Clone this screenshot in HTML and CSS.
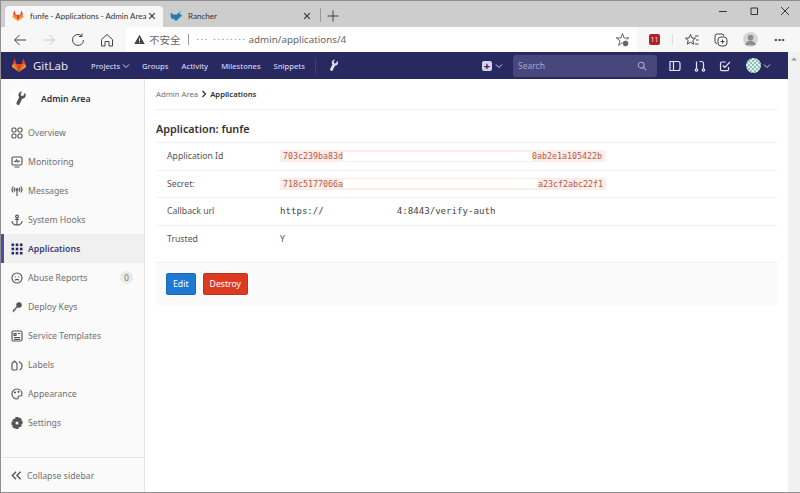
FILE: index.html
```html
<!DOCTYPE html>
<html>
<head>
<meta charset="UTF-8" />
<title>funfe - Applications - Admin Area</title>
<link rel="stylesheet" href="styles.css">
</head>
<body>
<div class="tabstrip">
  <div class="tab tab-active">
    <svg class="tab-icon" viewBox="0 0 16 16"><path fill="#e24329" d="M8 15 5.200 6.400h5.600z"/><path fill="#fc6d26" d="M8 15 5.200 6.400H1.300z"/><path fill="#fca326" d="M1.300 6.400.5 9c-.1.200 0 .5.200.6L8 15z"/><path fill="#e24329" d="M1.300 6.400h3.900L3.500 1.300c-.1-.3-.5-.3-.6 0z"/><path fill="#fc6d26" d="M8 15l2.800-8.600h3.900z"/><path fill="#fca326" d="m14.700 6.400.8 2.600c.1.200 0 .5-.2.6L8 15z"/><path fill="#e24329" d="M14.700 6.400h-3.900l1.700-5.100c.1-.3.5-.3.6 0z"/></svg>
    <span class="tab-title">funfe - Applications - Admin Area</span>
    <svg class="tab-close" viewBox="0 0 10 10"><path d="m1.500 1.500 7 7m0-7-7 7"/></svg>
  </div>
  <div class="tab">
    <svg class="tab-icon" viewBox="0 0 16 16"><path fill="#1c7fb0" d="M1 4h2v2h7V4h3v2h2.500v3H13c0 2-1 3-3 3v2H6v-2H4C2 12 1 10 1 8z"/><path fill="#3fa9d8" d="M12 2h2v2h-2z"/></svg>
    <span class="tab-title">Rancher</span>
    <svg class="tab-close" viewBox="0 0 10 10"><path d="m1.500 1.500 7 7m0-7-7 7"/></svg>
  </div>
  <span class="tab-sep"></span>
  <svg class="tab-new" viewBox="0 0 12 12"><path d="M6 .5v11M.5 6h11"/></svg>
  <div class="window-controls">
    <svg viewBox="0 0 10 10"><path d="M1 5.500h8"/></svg>
    <svg viewBox="0 0 10 10"><path d="M2 2h6.500v6.500H2z"/></svg>
    <svg viewBox="0 0 10 10"><path d="m1 1 8 8m0-8-8 8"/></svg>
  </div>
</div>

<div class="toolbar">
  <svg class="tool" viewBox="0 0 14 14"><path d="M13 7H1.500M6.500 2 1.500 7l5 5"/></svg>
  <svg class="tool tool-off" viewBox="0 0 14 14"><path d="M1 7h11.500M7.500 2l5 5-5 5"/></svg>
  <svg class="tool" viewBox="0 0 14 14"><path d="M12.500 7A5.500 5.500 0 1 1 10.500 2.700M11 .5v3H8"/></svg>
  <svg class="tool" viewBox="0 0 14 14"><path d="M1.500 6.500 7 1.500l5.500 5V13H9V8.500H5V13H1.500z"/></svg>
  <div class="address">
    <svg class="warn" viewBox="0 0 12 12"><path fill="#444" d="M6 .8 11.700 11H.3z"/><path d="M6 4.500v3.500M6 9v1"/></svg>
    <span class="insecure">不安全</span>
    <span class="address-sep"></span>
    <span class="masked">··· ········</span>
    <span class="url">admin/applications/4</span>
    <svg class="tool star" viewBox="0 0 14 14"><path d="M7.500 9.500 3.600 12.200 5 7.700 1.200 4.900H6L7.500.5 9 4.900h4.800L11.500 6.700"/><circle cx="10.500" cy="10.500" r="2.400" fill="#666"/></svg>
  </div>
  <span class="ext-badge">11</span>
  <span class="tool-sep"></span>
  <svg class="tool" viewBox="0 0 14 14"><path d="M5.500 1.500 7 5l3.500.2-2.700 2.300.9 3.700-3.200-2-3.200 2 .9-3.700L.5 5.200 4 5zM10 3h3.500M11 7h2.500M10 11h3.500"/></svg>
  <svg class="tool tool-gap" viewBox="0 0 14 14"><path d="M3 10.500A2 2 0 0 1 1 8.500V3a2 2 0 0 1 2-2h5a2 2 0 0 1 2 2"/><rect x="4" y="4" width="9" height="9" rx="3"/><path d="M8.500 6.500v4M6.500 8.500h4"/></svg>
  <span class="profile"><svg viewBox="0 0 16 16"><circle cx="8" cy="6" r="3" fill="#8c8c8c"/><path fill="#8c8c8c" d="M2.500 14c0-3 2.500-4.500 5.500-4.500s5.500 1.500 5.500 4.500z"/></svg></span>
  <span class="more">···</span>
</div>

<div class="page">
  <div class="app">
    <nav class="navbar">
      <svg class="logo" viewBox="0 0 16 16"><path fill="#e24329" d="M8 15 5.200 6.400h5.600z"/><path fill="#fc6d26" d="M8 15 5.200 6.400H1.300z"/><path fill="#fca326" d="M1.300 6.400.5 9c-.1.200 0 .5.200.6L8 15z"/><path fill="#e24329" d="M1.300 6.400h3.900L3.500 1.300c-.1-.3-.5-.3-.6 0z"/><path fill="#fc6d26" d="M8 15l2.800-8.600h3.900z"/><path fill="#fca326" d="m14.700 6.400.8 2.600c.1.200 0 .5-.2.6L8 15z"/><path fill="#e24329" d="M14.700 6.400h-3.900l1.700-5.100c.1-.3.5-.3.6 0z"/></svg>
      <span class="brand">GitLab</span>
      <ul class="nav-links">
        <li>Projects <svg class="caret" viewBox="0 0 8 8"><path d="m1 2.500 3 3 3-3"/></svg></li>
        <li>Groups</li>
        <li>Activity</li>
        <li>Milestones</li>
        <li>Snippets</li>
      </ul>
      <span class="nav-sep"></span>
      <svg class="nav-wrench" viewBox="0 0 16 16"><path transform="rotate(-20 8 8)" d="M14.300 3.400l-2.700 2.700-2-.5-.5-2L11.800.9a4 4 0 0 0-5.300 5L1.500 10.700a2 2 0 0 0 2.800 2.800l4.800-4.800a4 4 0 0 0 5.200-5.300z"/></svg>
      <div class="nav-right">
        <span class="plus-box">+</span>
        <svg class="caret caret-plus" viewBox="0 0 8 8"><path d="m1 2.500 3 3 3-3"/></svg>
        <div class="search">
          <span>Search</span>
          <svg viewBox="0 0 12 12"><circle cx="5" cy="5" r="3.500"/><path d="m7.500 7.500 3.500 3.500"/></svg>
        </div>
        <svg class="nav-icon nav-icon-first" viewBox="0 0 12 12"><path d="M1 1.500h3.500v9H1zM4.500 1.500H9c1.200 0 2 .8 2 2v5c0 1.200-.8 2-2 2H4.500"/></svg>
        <svg class="nav-icon" viewBox="0 0 12 12"><circle cx="2.500" cy="10" r="1.200"/><circle cx="9.500" cy="10" r="1.200"/><path d="M2.500 8.800V1.500M9.500 8.800V3.500c0-1.200-.8-2-2-2H5.500"/></svg>
        <svg class="nav-icon" viewBox="0 0 12 12"><path d="M9.500 7v2.500c0 .8-.5 1.200-1.200 1.200H2.700c-.7 0-1.200-.4-1.200-1.200V3.200C1.500 2.500 2 2 2.700 2h4M3.800 5.500l2 2L11 2"/></svg>
        <span class="nav-avatar"></span>
        <svg class="caret" viewBox="0 0 8 8"><path d="m1 2.500 3 3 3-3"/></svg>
      </div>
    </nav>

    <div class="layout">
      <aside class="sidebar">
        <div class="side-head">
          <span class="side-avatar"><svg viewBox="0 0 16 16"><path transform="rotate(-20 8 8)" d="M14.300 3.400l-2.700 2.700-2-.5-.5-2L11.800.9a4 4 0 0 0-5.300 5L1.500 10.700a2 2 0 0 0 2.800 2.800l4.800-4.800a4 4 0 0 0 5.200-5.300z"/></svg></span>
          <span class="side-title">Admin Area</span>
        </div>
        <ul class="side-menu">
          <li><svg viewBox="0 0 12 12"><rect x="1" y="1" width="4" height="4" rx="1.200"/><rect x="7" y="1" width="4" height="4" rx="1.200"/><rect x="1" y="7" width="4" height="4" rx="1.200"/><rect x="7" y="7" width="4" height="4" rx="1.200"/></svg>Overview</li>
          <li><svg viewBox="0 0 12 12"><rect x="1" y="1" width="10" height="8" rx="1.500"/><path d="M3 5.500h1.500l1-1.500 1 2 1-1H9M3.500 11h5"/></svg>Monitoring</li>
          <li><svg viewBox="0 0 12 12"><circle cx="6" cy="4.500" r="1"/><path d="M6 5.500V11M4 2.500C3 3.700 3 5.300 4 6.500M8 2.500c1 1.200 1 2.800 0 4M2.200 1.500C.6 3.500.6 5.500 2.200 7.500M9.800 1.500c1.600 2 1.600 4 0 6"/></svg>Messages</li>
          <li><svg viewBox="0 0 12 12"><circle cx="6" cy="2.500" r="1.400"/><path d="M6 4v7M4 5.500h4M1 7c0 2.500 2.500 4 5 4s5-1.500 5-4"/></svg>System Hooks</li>
          <li class="active"><svg viewBox="0 0 12 12"><g class="dots"><rect x=".5" y=".5" width="2.600" height="2.600"/><rect x="4.700" y=".5" width="2.600" height="2.600"/><rect x="8.900" y=".5" width="2.600" height="2.600"/><rect x=".5" y="4.700" width="2.600" height="2.600"/><rect x="4.700" y="4.700" width="2.600" height="2.600"/><rect x="8.900" y="4.700" width="2.600" height="2.600"/><rect x=".5" y="8.900" width="2.600" height="2.600"/><rect x="4.700" y="8.900" width="2.600" height="2.600"/><rect x="8.900" y="8.900" width="2.600" height="2.600"/></g></svg>Applications</li>
          <li><svg viewBox="0 0 12 12"><circle cx="6" cy="6" r="5"/><path d="M3.800 5h1M7.200 5h1M4 8.300c1.200-1 2.800-1 4 0"/></svg>Abuse Reports<span class="count">0</span></li>
          <li><svg viewBox="0 0 12 12"><circle cx="8" cy="4" r="2.200" class="solid"/><path d="M6.500 5.500 2 10M2 10l1 1M3.500 8.500l1 1"/></svg>Deploy Keys</li>
          <li><svg viewBox="0 0 12 12"><rect x="1" y="1" width="10" height="10" rx="1.500"/><path d="M3 7.500h6M3 9.300h6M3 3.500h2v2H3zM7 3.500h2"/></svg>Service Templates</li>
          <li><svg viewBox="0 0 12 12"><path d="M1 4.500 3.500 2 6 4.500V10c0 .6-.4 1-1 1H2c-.6 0-1-.4-1-1zM8 2.500l2.300 2.200c.4.400.7.800.7 1.300V8c0 1-1 2-2.500 3"/></svg>Labels</li>
          <li><svg viewBox="0 0 12 12"><path d="M6 1a5 5 0 0 0 0 10c1 0 1.300-.7 1-1.500-.3-.8.200-1.500 1-1.500h1.500C10.500 8 11 7 11 6c0-3-2.200-5-5-5z"/><circle cx="4" cy="4.500" r=".5"/><circle cx="7.500" cy="3.800" r=".5"/></svg>Appearance</li>
          <li><svg viewBox="0 0 12 12"><path class="solid" d="M5 .5h2l.4 1.500 1.400-.7 1.400 1.400-.7 1.400 1.500.4v2l-1.500.4.700 1.400-1.400 1.400-1.400-.7L7 11.500H5l-.4-1.500-1.400.7-1.400-1.400.7-1.400L1 7.500v-2l1.500-.4-.7-1.400 1.400-1.400 1.400.7z"/><circle cx="6" cy="6" r="1.500" fill="#fafafa" stroke="none"/></svg>Settings</li>
        </ul>
        <div class="collapse"><svg viewBox="0 0 12 12"><path d="M5.500 2 1.500 6l4 4M10.500 2l-4 4 4 4"/></svg>Collapse sidebar</div>
      </aside>

      <main class="content">
        <div class="crumbs"><span class="crumb-root">Admin Area</span><svg viewBox="0 0 8 8"><path d="m2.500 1 3 3-3 3"/></svg><span class="crumb-here">Applications</span></div>
        <h3 class="app-title">Application: funfe</h3>
        <div class="details">
          <div class="row"><span class="key">Application Id</span><code class="secret"><span>703c239ba83d</span><span class="redact redact-id"></span><span>0ab2e1a105422b</span></code></div>
          <div class="row"><span class="key">Secret:</span><code class="secret"><span>718c5177066a</span><span class="redact redact-secret"></span><span>a23cf2abc22f1</span></code></div>
          <div class="row"><span class="key">Callback url</span><span class="callback"><span>https://</span><span class="callback-gap"></span><span>4:8443/verify-auth</span></span></div>
          <div class="row"><span class="key">Trusted</span><span class="val">Y</span></div>
        </div>
        <div class="actions">
          <a class="btn btn-edit">Edit</a>
          <a class="btn btn-destroy">Destroy</a>
        </div>
      </main>
    </div>
  </div>
  <div class="scrollbar"><svg viewBox="0 0 8 8"><path d="M1 5.500 4 2.500l3 3z"/></svg></div>
</div>
</body>
</html>
```

FILE: styles.css
```css
* {
  box-sizing: border-box;
}

html, body {
  height: 100%;
}

body {
  margin: 0;
  font-family: "Noto Sans", "Open Sans", sans-serif;
  font-size: 8.7px;
  color: #555;
  background: #fff;
  display: flex;
  flex-direction: column;
  overflow: hidden;
  border: 1px solid #8f8f8f;
  border-width: 1px 0 1px 1px;
}

svg {
  flex: none;
  fill: none;
  stroke: currentColor;
}

ul {
  list-style: none;
  margin: 0;
  padding: 0;
}

/* Browser chrome */
.tabstrip {
  height: 26px;
  flex: none;
  background: #cdcdcd;
  display: flex;
  align-items: flex-end;
  padding-left: 4px;
}

.tab {
  width: 158px;
  height: 21px;
  display: flex;
  align-items: center;
  padding: 0 10px 2px 7px;
  border-radius: 4px 4px 0 0;
  color: #333;
}

.tab-active {
  padding-right: 7px;
  background: #f7f7f7;
}

.tab-icon {
  width: 12px;
  height: 12px;
  stroke: none;
}

.tab-title {
  flex: 1;
  min-width: 0;
  margin-left: 6px;
  white-space: nowrap;
  font-family: Lato, "Noto Sans", sans-serif;
  font-size: 8px;
}

.tab-close {
  width: 8px;
  height: 8px;
  margin-left: 1px;
  stroke-width: 1.400;
}

.tab-sep {
  width: 1px;
  height: 14px;
  margin: 0 0 5px -1px;
  background: #999;
}

.tab-new {
  width: 12px;
  height: 12px;
  margin: 0 0 5px 6px;
  color: #444;
}

.window-controls {
  margin: 0 10px 11px auto;
  display: flex;
  gap: 21px;
  color: #333;
}

.window-controls svg {
  width: 10px;
  height: 10px;
}

.toolbar {
  height: 25px;
  flex: none;
  background: #f7f7f7;
  display: flex;
  align-items: center;
  padding-left: 12px;
  color: #444;
}

.tool {
  width: 14px;
  height: 14px;
  margin-right: 15px;
}

.tool-off {
  color: #c8c8c8;
}

.tool-gap {
  margin-right: 15px;
}

.address {
  width: 511px;
  height: 25px;
  margin-left: -3px;
  background: #fff;
  display: flex;
  align-items: center;
  padding-left: 8px;
  font-size: 9.800px;
  color: #666;
}

.warn {
  width: 11px;
  height: 11px;
  stroke: none;
}

.warn path:last-child {
  stroke: #fff;
}

.insecure {
  margin-left: 4px;
  font-family: "Noto Sans CJK SC", sans-serif;
  font-size: 10.500px;
}

.address-sep {
  width: 1px;
  height: 11px;
  margin: 0 8px 0 7px;
  background: #999;
}

.masked {
  width: 52px;
  color: #888;
  font-size: 9px;
  letter-spacing: 1.800px;
  white-space: nowrap;
}

.star {
  margin: 0 8px 0 auto;
}

.ext-badge {
  width: 11px;
  height: 11px;
  margin: 0 12px 0 12px;
  background: #b3202c;
  border-radius: 2px;
  color: #f5d5d5;
  font-size: 7px;
  line-height: 11px;
  text-align: center;
}

.tool-sep {
  width: 1px;
  height: 11px;
  margin-right: 12px;
  background: #dedede;
}

.profile {
  width: 15px;
  height: 15px;
  border-radius: 50%;
  background: #d6d6d6;
  overflow: hidden;
}

.profile svg {
  display: block;
  width: 15px;
  height: 15px;
  stroke: none;
}

.more {
  margin-left: 16px;
  font-size: 13px;
  font-weight: 700;
  line-height: 1;
  color: #333;
}

/* Page area */
.page {
  flex: 1;
  min-height: 0;
  display: flex;
}

.app {
  flex: 1;
  min-width: 0;
  display: flex;
  flex-direction: column;
}

.scrollbar {
  width: 12px;
  flex: none;
  background: #f1f1f1;
  padding-top: 3px;
  color: #9a9a9a;
}

.scrollbar svg {
  display: block;
  width: 8px;
  height: 8px;
  margin: 0 auto;
  fill: currentColor;
  stroke: none;
}

/* GitLab navbar */
.navbar {
  height: 27px;
  flex: none;
  background: #292961;
  display: flex;
  align-items: center;
  padding-left: 10px;
  color: #d1d1f0;
}

.logo {
  width: 16px;
  height: 15px;
  stroke: none;
}

.brand {
  margin-left: 6px;
  font-size: 11.500px;
  color: #e4e4f7;
}

.nav-links {
  display: flex;
  align-items: center;
  gap: 13px;
  margin-left: 23px;
  font-size: 7.600px;
  font-weight: 500;
}

.nav-links li:first-child {
  margin-right: -1px;
}

.caret {
  width: 8px;
  height: 8px;
  vertical-align: -1px;
}

.nav-sep {
  width: 1px;
  height: 16px;
  margin-left: 10px;
  background: #3e3e78;
}

.nav-wrench {
  width: 12px;
  height: 13px;
  margin-left: 12px;
  fill: #dcdcf2;
  stroke: none;
}

.nav-right {
  margin-left: auto;
  display: flex;
  align-items: center;
  padding-right: 17px;
}

.plus-box {
  width: 10px;
  height: 10px;
  border-radius: 2px;
  background: #d1d1f0;
  color: #292961;
  font-size: 11px;
  font-weight: 700;
  line-height: 9px;
  text-align: center;
}

.caret-plus {
  margin-left: 3px;
}

.search {
  width: 144px;
  height: 22px;
  margin-left: 10px;
  padding: 0 10px 0 5px;
  border-radius: 3px;
  background: #47477d;
  display: flex;
  align-items: center;
  justify-content: space-between;
  font-size: 8.500px;
  color: #a6a6cf;
}

.search svg {
  width: 10px;
  height: 10px;
  stroke-width: 1.300;
}

.nav-icon {
  width: 12px;
  height: 12px;
  margin-left: 13px;
  stroke-width: 1.200;
  color: #e4e4f7;
}

.nav-icon-first {
  margin-left: 12px;
}

.nav-avatar {
  width: 15px;
  height: 15px;
  margin: 0 2px 0 15px;
  border-radius: 50%;
  background: repeating-conic-gradient(#e3f1ec 0 25%, #8cc2b4 0 50%) 0 0 / 4px 4px;
}

/* Sidebar */
.layout {
  flex: 1;
  min-height: 0;
  display: flex;
}

.sidebar {
  width: 144px;
  flex: none;
  background: #fafafa;
  border-right: 1px solid #e5e5e5;
  display: flex;
  flex-direction: column;
}

.side-head {
  height: 39px;
  display: flex;
  align-items: center;
  padding-left: 8px;
}

.side-avatar {
  width: 23px;
  height: 23px;
  border-radius: 50%;
  background: #fff;
  display: flex;
  align-items: center;
  justify-content: center;
}

.side-avatar svg {
  width: 14px;
  height: 15px;
  fill: #555;
  stroke: none;
}

.side-title {
  margin-left: 9px;
  font-weight: 600;
  color: #333;
}

.side-menu li {
  height: 29px;
  display: flex;
  align-items: center;
  gap: 5px;
  padding: 0 11px 0 10px;
  color: #707070;
}

.side-menu li svg {
  width: 12px;
  height: 12px;
  color: #555;
  stroke-width: 1.150;
}

.side-menu .solid {
  fill: #555;
}

.side-menu .dots {
  fill: currentColor;
  stroke: none;
}

.side-menu .active {
  background: #f0f0f0;
  border-left: 3px solid #4b4ba3;
  padding-left: 7px;
  color: #3c3c78;
  font-weight: 600;
}

.side-menu .active svg {
  color: #292961;
}

.count {
  margin-left: auto;
  width: 13px;
  height: 13px;
  border-radius: 50%;
  background: #eaeaea;
  font-size: 8px;
  line-height: 13px;
  text-align: center;
}

.collapse {
  margin-top: auto;
  height: 35px;
  padding: 1px 0 0 10px;
  border-top: 1px solid #e5e5e5;
  display: flex;
  align-items: center;
  gap: 5px;
  color: #707070;
}

.collapse svg {
  width: 11px;
  height: 11px;
  color: #555;
  stroke-width: 1.500;
}

/* Main */
.content {
  flex: 1;
  min-width: 0;
  padding: 0 11px;
}

.crumbs {
  height: 31px;
  display: flex;
  align-items: center;
  gap: 2px;
  border-bottom: 1px solid #efefef;
  font-size: 7.700px;
}

.crumb-root {
  color: #707070;
}

.crumbs svg {
  width: 8px;
  height: 8px;
  color: #333;
  stroke-width: 1.300;
}

.crumb-here {
  color: #333;
  font-weight: 600;
}

.app-title {
  margin: 0;
  height: 32px;
  display: flex;
  align-items: center;
  padding-top: 5px;
  font-size: 10.800px;
  font-weight: 600;
  color: #333;
}

.details {
  border-top: 1px solid #f0f0f0;
  height: 120px;
}

.row {
  height: 27.500px;
  padding-left: 11px;
  display: flex;
  align-items: center;
  border-bottom: 1px solid #f2f2f2;
}

.row:last-child {
  height: 26px;
  border-bottom: 0;
}

.key {
  width: 113px;
}

.secret {
  display: flex;
  height: 12px;
  padding: 0 3px;
  background: #fbeeea;
  font-family: "DejaVu Sans Mono", monospace;
  font-size: 8.300px;
  line-height: 12px;
  color: #b85a48;
}

.redact {
  height: 9px;
  margin-top: 1.500px;
  background: #fff;
}

.redact-id {
  width: 189px;
}

.redact-secret {
  width: 195px;
}

.callback {
  display: flex;
  font-family: "DejaVu Sans Mono", monospace;
  font-size: 9.100px;
  color: #444;
}

.callback-gap {
  width: 73px;
}

.actions {
  height: 43px;
  padding: 10px 10px 0;
  display: flex;
  align-items: flex-start;
  gap: 7px;
  background: #fafafa;
  border-top: 1px solid #efefef;
}

.btn {
  height: 22px;
  padding: 0 6px;
  border-radius: 2px;
  display: flex;
  align-items: center;
  color: #fff;
  font-size: 8.700px;
}

.btn-edit {
  background: #1f78d1;
  border: 1px solid #1b69b6;
}

.btn-destroy {
  background: #db3b21;
  border: 1px solid #c0341d;
}
```
